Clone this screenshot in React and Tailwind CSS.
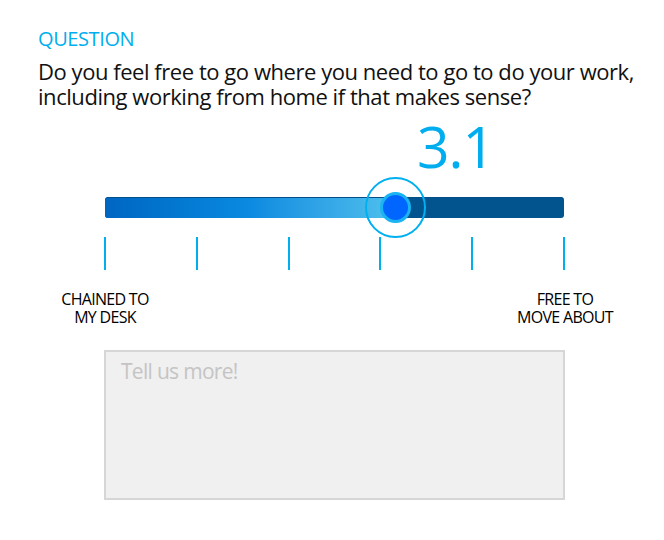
import React from "react";

export default function App() {
  const ticks = [0, 1, 2, 3, 4, 5];
  return (
    <div className="w-[664px] h-[540px] bg-white overflow-hidden">
      <div className="font-['Open_Sans',sans-serif] text-black">
        <div className="pl-[38px] pt-[26px]">
          <div className="text-[20px] leading-[26px] text-[#00aeef] tracking-[-0.4px]">QUESTION</div>
          <div className="mt-[7px] text-[22px] leading-[25px] tracking-[-0.45px] font-medium text-[#111]">
            Do you feel free to go where you need to go to do your work,
            <br />
            including working from home if that makes sense?
          </div>
        </div>

        <div className="pl-[105px] w-[564px]">
          <div className="mt-[7px] h-[60px] flex items-end">
            <div className="ml-[312px] text-[57px] leading-[60px] text-[#00aeef] tracking-[-1px]">3.1</div>
          </div>
          <div className="relative mt-[21px] h-[21px] w-[459px]">
            <div className="flex h-full w-full rounded-[3px] overflow-hidden border-t border-[#004f8a] bg-[#02548f]">
              <div className="h-full w-[290px] bg-gradient-to-r from-[#0066c2] via-[#0a8ae0] to-[#4ec0ec]" />
            </div>
            <div className="absolute left-[260px] top-[-20px] w-[61px] h-[61px] rounded-full border-[2.5px] border-[#00b0f0] flex items-center justify-center">
              <div className="w-[31px] h-[31px] rounded-full bg-[#0066ff] border-[3px] border-[#1ab4f2]" />
            </div>
          </div>
          <div className="mt-[19px] ml-[-1px] w-[461px] flex justify-between">
            {ticks.map((t) => (
              <div key={t} className="w-[2px] h-[33px] bg-[#00b0ee]" />
            ))}
          </div>
        </div>

        <div className="ml-[45px] w-[580px] mt-[20px] flex justify-between text-[16px] leading-[18px] tracking-[-0.7px] text-center text-black">
          <div className="w-[120px]">CHAINED TO<br />MY DESK</div>
          <div className="w-[120px]">FREE TO<br />MOVE ABOUT</div>
        </div>

        <div className="ml-[104px] mt-[24px] w-[461px] h-[150px] border-2 border-[#d6d6d6] bg-[#f0f0f0] px-[15px] pt-[6px]">
          <div className="text-[21px] leading-[26px] text-[#c4c4c4] tracking-[-0.7px]">Tell us more!</div>
        </div>
      </div>
    </div>
  );
}
